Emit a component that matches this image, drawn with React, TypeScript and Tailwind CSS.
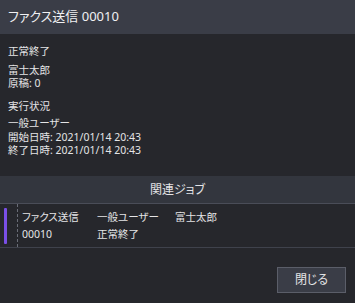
import React from 'react';

const fontStack = "font-['Noto_Sans','Noto_Sans_CJK_JP',sans-serif] [font-feature-settings:'palt']";

const JobRow: React.FC = () => (
  <div className="flex h-[44px] border-b border-[#3f424c]">
    {/* status marker */}
    <div className="w-[18px] shrink-0 border-r border-dashed border-[#6a6d77] pl-[4px] pt-[4px] pb-[3px]">
      <div className="w-[3px] h-full bg-[#7a4fe6] rounded-[1px]"></div>
    </div>
    <div className="flex flex-col justify-center gap-[3px] pl-[4px] text-[10.5px] leading-[14px]">
      <div className="flex">
        <span className="w-[75px]">ファクス送信</span>
        <span className="w-[78px]">一般ユーザー</span>
        <span>富士太郎</span>
      </div>
      <div className="flex">
        <span className="w-[75px]">00010</span>
        <span>正常終了</span>
      </div>
    </div>
  </div>
);

export default function App() {
  return (
    <div className={`w-[355px] h-[303px] bg-[#26272c] text-[#e4e4e6] flex flex-col ${fontStack}`}>
      {/* Title */}
      <div className="h-[34px] shrink-0 bg-[#3a3d47] px-[8px] flex items-center text-[13px] text-[#f0f0f2]">
        ファクス送信 00010
      </div>

      {/* Details */}
      <div className="h-[142px] shrink-0 px-[8px] pt-[11px] text-[10.5px] leading-[13.5px]">
        <div>正常終了</div>
        <div className="mt-[5px]">
          <div>富士太郎</div>
          <div>原稿: 0</div>
        </div>
        <div className="mt-[9px]">実行状況</div>
        <div className="mt-[4px]">
          <div>一般ユーザー</div>
          <div>開始日時: 2021/01/14 20:43</div>
          <div>終了日時: 2021/01/14 20:43</div>
        </div>
      </div>

      {/* Related jobs */}
      <div className="h-[28px] shrink-0 bg-[#33363e] border-b border-[#4a4d58] flex items-center justify-center text-[12px]">
        関連ジョブ
      </div>
      <JobRow />

      {/* Footer */}
      <div className="flex-1 flex items-start justify-end pt-[19px] pr-[9px]">
        <button className="w-[69px] h-[26px] bg-[#3a3d47] border border-[#5b5e69] text-[12px] text-[#e4e4e6] flex items-center justify-center">
          閉じる
        </button>
      </div>
    </div>
  );
}
